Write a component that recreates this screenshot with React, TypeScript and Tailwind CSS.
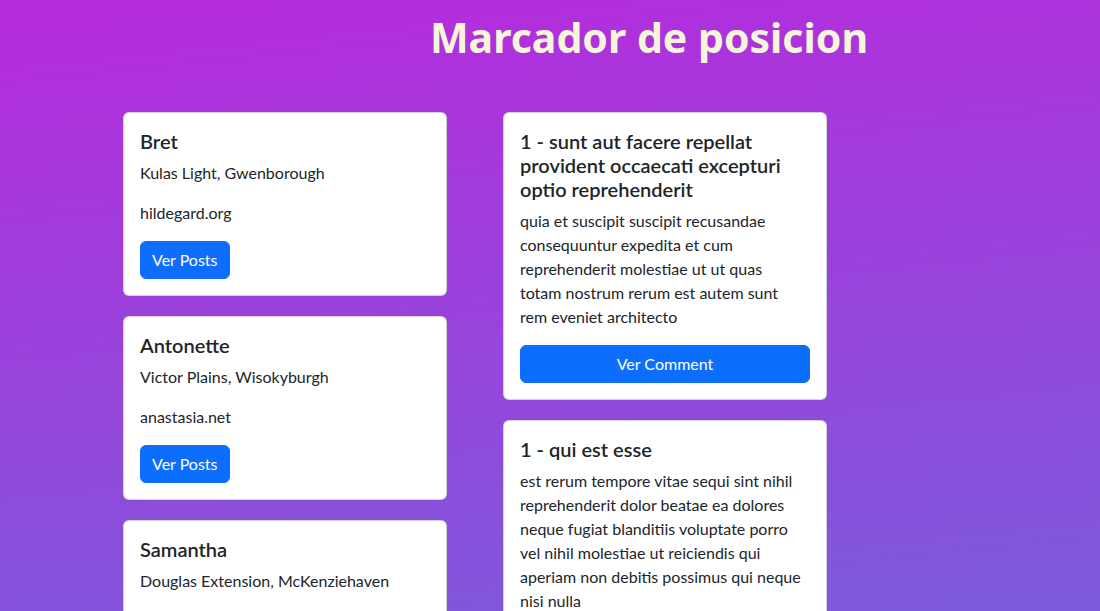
import React from "react";

const users = [
  { name: "Bret", address: "Kulas Light, Gwenborough", site: "hildegard.org" },
  { name: "Antonette", address: "Victor Plains, Wisokyburgh", site: "anastasia.net" },
  { name: "Samantha", address: "Douglas Extension, McKenziehaven", site: "ramiro.info" },
];

const posts = [
  {
    title: ["1 - sunt aut facere repellat", "provident occaecati excepturi", "optio reprehenderit"],
    body: [
      "quia et suscipit suscipit recusandae",
      "consequuntur expedita et cum",
      "reprehenderit molestiae ut ut quas",
      "totam nostrum rerum est autem sunt",
      "rem eveniet architecto",
    ],
  },
  {
    title: ["1 - qui est esse"],
    body: [
      "est rerum tempore vitae sequi sint nihil",
      "reprehenderit dolor beatae ea dolores",
      "neque fugiat blanditiis voluptate porro",
      "vel nihil molestiae ut reiciendis qui",
      "aperiam non debitis possimus qui neque",
      "nisi nulla",
    ],
  },
];

const card = "bg-white border border-[rgba(0,0,0,0.175)] rounded-[6px] p-4 text-[#212529]";
const btn = "bg-[#0d6efd] text-white border border-[#0d6efd] rounded-[6px] px-3 py-1.5 text-base leading-6";

function Lines({ lines }: { lines: string[] }) {
  return (
    <>
      {lines.map((l, i) => (
        <React.Fragment key={i}>
          {i > 0 && <br />}
          {l}
        </React.Fragment>
      ))}
    </>
  );
}

export default function App() {
  return (
    <div
      className="h-[611px] overflow-hidden bg-[linear-gradient(174deg,#b62bdb,#7c5bdb)]"
      style={{ fontFamily: "Lato, sans-serif" }}
    >
      <div className="flex justify-center pl-[198px] pt-[13px]">
        <h1
          className="text-[41px] leading-[48px] font-bold text-[#f5f5dc]"
          style={{ fontFamily: "'Noto Sans', sans-serif" }}
        >
          Marcador de posicion
        </h1>
      </div>
      <div className="flex items-start gap-[56px] pl-[123px] pt-[51px]">
        <div className="flex w-[324px] flex-col gap-5">
          {users.map((u) => (
            <div key={u.name} className={card}>
              <h5 className="mb-2 text-[20px] leading-6 font-semibold">{u.name}</h5>
              <p className="mb-4 text-base leading-6">{u.address}</p>
              <p className="mb-4 text-base leading-6">{u.site}</p>
              <button className={btn + " px-[11px]"}>Ver Posts</button>
            </div>
          ))}
        </div>
        <div className="flex w-[324px] flex-col gap-5">
          {posts.map((p, i) => (
            <div key={i} className={card}>
              <h5 className="mb-2 text-[20px] leading-6 font-semibold whitespace-nowrap">
                <Lines lines={p.title} />
              </h5>
              <p className="mb-4 text-base leading-6 whitespace-nowrap">
                <Lines lines={p.body} />
              </p>
              <button className={btn + " w-full"}>Ver Comment</button>
            </div>
          ))}
        </div>
      </div>
    </div>
  );
}
